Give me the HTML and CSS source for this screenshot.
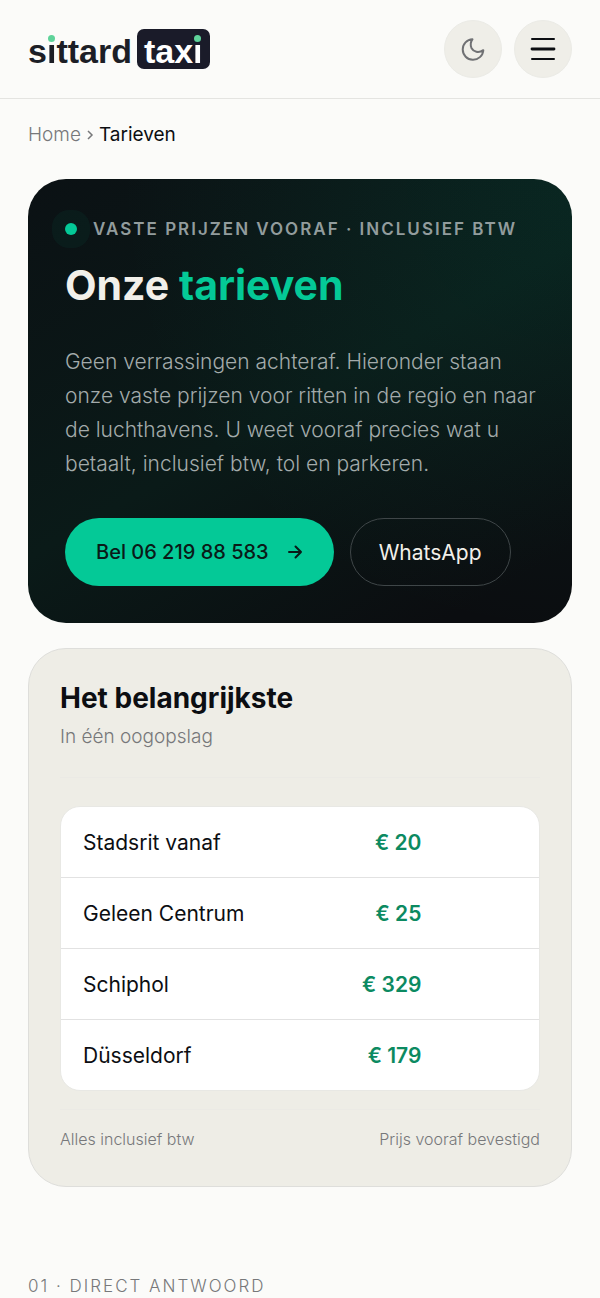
FILE: index.html
```html
<!DOCTYPE html>
<html lang="nl">
<head>
    <meta charset="UTF-8">
    <meta name="viewport" content="width=device-width, initial-scale=1.0">
    <title>Tarieven - Sittard Taxi</title>
    <link rel="stylesheet" href="styles.css">
</head>
<body>
    <header class="site-header">
        <a href="#" class="logo" aria-label="Sittard Taxi"><span class="logo-word">s<span class="logo-i">i</span>ttard</span><span class="logo-word logo-badge">tax<span class="logo-i">i</span></span></a>
        <div class="header-actions">
            <button type="button" class="round-button theme-button" aria-label="Donker thema">
                <svg width="26" height="26" viewBox="0 0 26 26" fill="none" stroke="currentColor" stroke-width="2" stroke-linejoin="round">
                    <path d="M12.500 3.200A10.300 10.300 0 1 0 23.300 14.200C18.500 17.400 13.500 15.800 11.600 12.200C10.200 9.300 10.600 5.900 12.500 3.200Z"/>
                </svg>
            </button>
            <button type="button" class="round-button" aria-label="Menu">
                <svg width="26" height="26" viewBox="0 0 26 26" fill="none" stroke="currentColor" stroke-linecap="round">
                    <path stroke-width="2" d="M2 3H24M2 23H24"/>
                    <path stroke-width="2.800" d="M2 13H24"/>
                </svg>
            </button>
        </div>
    </header>

    <main class="page">
        <nav class="breadcrumb" aria-label="Kruimelpad">
            <a href="#">Home</a>
            <svg width="8" height="12" viewBox="0 0 8 12" fill="none" stroke="currentColor" stroke-width="1.500"><path d="M2 2L6 6L2 10"/></svg>
            <span class="current">Tarieven</span>
        </nav>

        <section class="hero">
            <p class="hero-label"><span class="dot"></span>Vaste prijzen vooraf · Inclusief btw</p>
            <h1>Onze <em>tarieven</em></h1>
            <p class="hero-text">Geen verrassingen achteraf. Hieronder staan onze vaste prijzen voor ritten in de regio en naar de luchthavens. U weet vooraf precies wat u betaalt, inclusief btw, tol en parkeren.</p>
            <div class="hero-buttons">
                <a href="tel:0621988583" class="btn btn-call">Bel 06 219 88 583
                    <svg width="16" height="16" viewBox="0 0 16 16" fill="none" stroke="currentColor" stroke-width="2" stroke-linecap="round" stroke-linejoin="round"><path d="M2 8H14M8.500 2.500L14 8L8.500 13.500"/></svg>
                </a>
                <a href="#" class="btn btn-outline">WhatsApp</a>
            </div>
        </section>

        <section class="summary">
            <h2>Het belangrijkste</h2>
            <p class="summary-sub">In één oogopslag</p>
            <table class="prices">
                <tbody>
                    <tr><th scope="row">Stadsrit vanaf</th><td class="price">€ 20</td><td></td></tr>
                    <tr><th scope="row">Geleen Centrum</th><td class="price">€ 25</td><td></td></tr>
                    <tr><th scope="row">Schiphol</th><td class="price">€ 329</td><td></td></tr>
                    <tr><th scope="row">Düsseldorf</th><td class="price">€ 179</td><td></td></tr>
                </tbody>
            </table>
            <div class="summary-footer">
                <span>Alles inclusief btw</span>
                <span>Prijs vooraf bevestigd</span>
            </div>
        </section>

        <p class="section-label">01 · Direct antwoord</p>
    </main>
</body>
</html>
```
FILE: styles.css
```css
* {
    box-sizing: border-box;
}
body {
    margin: 0;
    background-color: #fbfbf9;
    color: #0c0e12;
    font-family: Inter, "Noto Sans", sans-serif;
    font-size: 20px;
}
h1, h2, p {
    margin: 0;
}
a {
    color: inherit;
    text-decoration: none;
}
.site-header {
    display: flex;
    justify-content: space-between;
    align-items: center;
    padding: 20px 28px;
    border-bottom: 1px solid #e4e4e1;
}
.logo {
    display: flex;
    align-items: center;
    gap: 5px;
    color: #1c1e26;
    font-family: "Liberation Sans", sans-serif;
    font-size: 34px;
    font-weight: bold;
    line-height: 36px;
}
.logo-word {
    padding-top: 4px;
}
.logo-badge {
    padding-right: 7px;
    padding-left: 7px;
    border-radius: 7px;
    background-color: #1a1b29;
    color: #fff;
}
/* the dot of the i is hidden and drawn again as a green circle */
.logo-i {
    display: inline-block;
    position: relative;
    background: linear-gradient(transparent 11px, currentColor 11px);
    -webkit-background-clip: text;
    background-clip: text;
    -webkit-text-fill-color: transparent;
}
.logo-i::before {
    content: "";
    position: absolute;
    top: 2px;
    left: 1px;
    width: 7px;
    height: 7px;
    border-radius: 50%;
    background-color: #5fd39a;
}
.header-actions {
    display: flex;
    gap: 12px;
}
.round-button {
    display: flex;
    justify-content: center;
    align-items: center;
    width: 58px;
    height: 58px;
    padding: 0;
    border: 1px solid #ebebe6;
    border-radius: 50%;
    background-color: #efeee8;
    color: #0c0e12;
    cursor: pointer;
}
.theme-button {
    color: #707174;
}
.page {
    padding: 21px 28px 0;
}
.breadcrumb {
    display: flex;
    align-items: center;
    gap: 5px;
    margin-bottom: 29px;
    color: #77787a;
    font-size: 19px;
    font-weight: 300;
    line-height: 30px;
}
.current {
    color: #0c0e12;
    font-weight: 400;
}
.hero {
    margin-bottom: 25px;
    padding: 37px 32px 37px 37px;
    border-radius: 38px;
    background: radial-gradient(circle at 100% 0, rgba(0, 200, 150, 0.08), transparent 65%), linear-gradient(150deg, #0b1114, #0a1a18 50%, #0b0d10 90%);
    color: #f2f0ea;
}
.hero-label {
    display: flex;
    align-items: center;
    gap: 16px;
    color: #929c9d;
    font-size: 17px;
    font-weight: 600;
    letter-spacing: 2px;
    line-height: 26px;
    text-transform: uppercase;
}
.dot {
    flex: none;
    width: 12px;
    height: 12px;
    border-radius: 50%;
    background-color: #04c997;
    box-shadow: 0 0 0 13px rgba(4, 201, 151, 0.05);
}
h1 {
    margin: 16px 0 33px;
    font-size: 41px;
    font-weight: 700;
    line-height: 54px;
}
h1 em {
    color: #04c997;
    font-style: normal;
}
.hero-text {
    margin-bottom: 37px;
    color: #a3abab;
    font-size: 21px;
    font-weight: 300;
    line-height: 34px;
}
.hero-buttons {
    display: flex;
    flex-wrap: wrap;
    gap: 16px;
}
.btn {
    display: flex;
    align-items: center;
    gap: 18px;
    height: 68px;
    padding: 0 31px;
    border-radius: 34px;
    font-size: 20px;
}
.btn-call {
    background-color: #04c997;
    color: #0a1a18;
    font-weight: 500;
}
.btn-outline {
    padding: 0 28px;
    border: 1px solid #3f4648;
    font-size: 21px;
}
.summary {
    padding: 31px 31px 33px;
    border: 1px solid #dededb;
    border-radius: 38px;
    background-color: #eeede6;
}
h2 {
    font-size: 28px;
    font-weight: 700;
    line-height: 36px;
}
.summary-sub {
    padding: 6px 0 25px;
    border-bottom: 1px solid #ebeae5;
    color: #77787a;
    font-size: 19px;
    font-weight: 300;
    line-height: 30px;
}
.prices {
    width: 100%;
    margin: 28px 0 18px;
    border: 1px solid #e8e8e4;
    border-radius: 20px;
    border-spacing: 0;
    background-color: #fff;
    table-layout: fixed;
}
.prices th,
.prices td {
    height: 71px;
    padding: 0 22px;
    border-bottom: 1px solid #e2e2e2;
    font-size: 21px;
    font-weight: 400;
    text-align: left;
}
.prices th {
    width: 45%;
}
.prices td:last-child {
    width: 20%;
}
.prices tr:last-child th,
.prices tr:last-child td {
    height: 70px;
    border-bottom: none;
}
.prices .price {
    color: #0c8a61;
    font-weight: 600;
    text-align: right;
}
.summary-footer {
    display: flex;
    justify-content: space-between;
    padding-top: 15px;
    border-top: 1px solid #ebeae5;
    color: #77787a;
    font-size: 16px;
    font-weight: 300;
    line-height: 28px;
}
.section-label {
    margin-top: 86px;
    color: #77787a;
    font-size: 17px;
    font-weight: 300;
    letter-spacing: 2px;
    line-height: 26px;
    text-transform: uppercase;
}
```
